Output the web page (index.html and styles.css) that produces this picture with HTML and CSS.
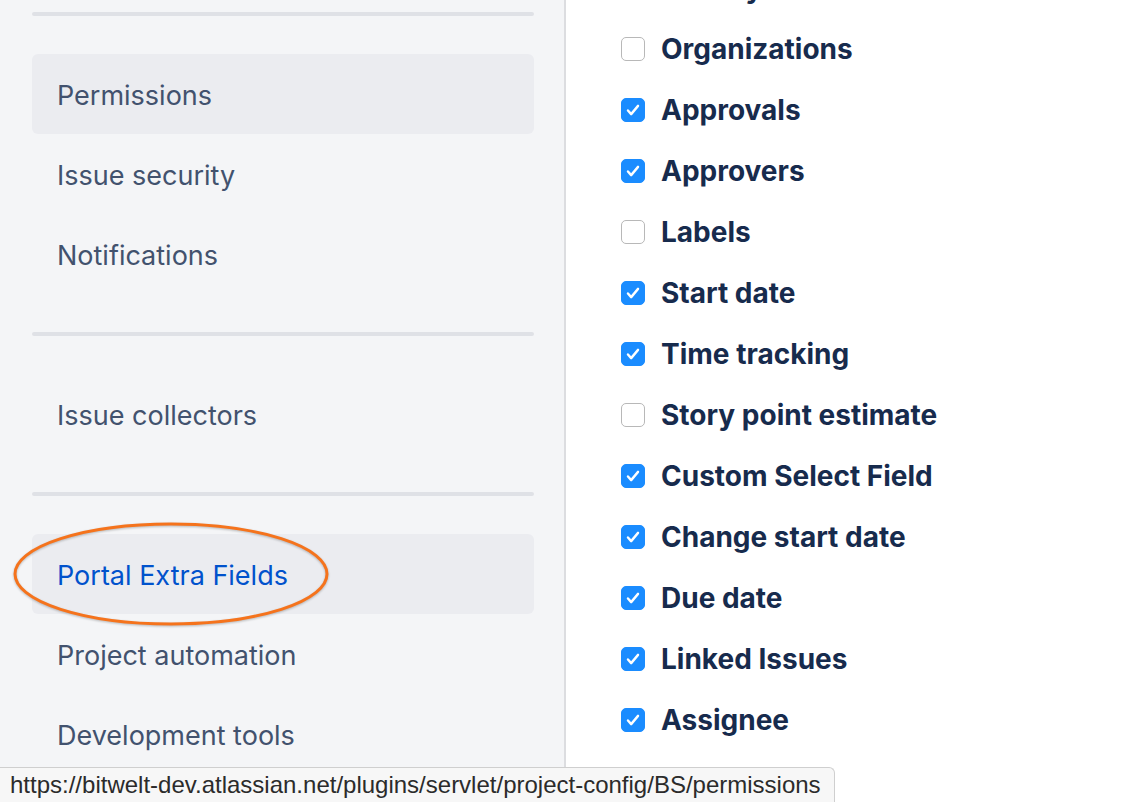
FILE: index.html
```html
<!DOCTYPE html>
<html lang="en">
<head>
    <meta charset="UTF-8">
    <title>Project settings</title>
    <link rel="stylesheet" href="styles.css">
</head>
<body>
    <div class="page">
        <nav class="sidebar">
            <div class="sep"></div>
            <a class="nav-item selected">Permissions</a>
            <a class="nav-item">Issue security</a>
            <a class="nav-item">Notifications</a>
            <div class="sep"></div>
            <a class="nav-item">Issue collectors</a>
            <div class="sep"></div>
            <a class="nav-item selected active">Portal Extra Fields</a>
            <a class="nav-item">Project automation</a>
            <a class="nav-item">Development tools</a>

            <svg class="marker" width="340" height="120" viewBox="0 0 340 120">
                <ellipse cx="171" cy="58" rx="156" ry="50" fill="none" stroke="#f5731c" stroke-width="3"/>
            </svg>
        </nav>

        <main class="fields">
            <label class="field"><span class="box on"></span>Priority</label>
            <label class="field"><span class="box"></span>Organizations</label>
            <label class="field"><span class="box on"></span>Approvals</label>
            <label class="field"><span class="box on"></span>Approvers</label>
            <label class="field"><span class="box"></span>Labels</label>
            <label class="field"><span class="box on"></span>Start date</label>
            <label class="field"><span class="box on"></span>Time tracking</label>
            <label class="field"><span class="box"></span>Story point estimate</label>
            <label class="field"><span class="box on"></span>Custom Select Field</label>
            <label class="field"><span class="box on"></span>Change start date</label>
            <label class="field"><span class="box on"></span>Due date</label>
            <label class="field"><span class="box on"></span>Linked Issues</label>
            <label class="field"><span class="box on"></span>Assignee</label>
        </main>
    </div>

    <div class="status-url">https://bitwelt-dev.atlassian.net/plugins/servlet/project-config/BS/permissions</div>
</body>
</html>
```

FILE: styles.css
```css
body {
    margin: 0;
    background: #fff;
    font-family: "Inter", "Noto Sans", sans-serif;
    overflow: hidden;
}

.page {
    display: flex;
    height: 802px;
}

.sidebar {
    position: relative;
    width: 502px;
    flex: none;
    padding: 12px 30px 0 32px;
    background: #f4f5f7;
    border-right: 2px solid #dcdde0;
}

.sep {
    height: 4px;
    border-radius: 2px;
    background: #dfe1e6;
    margin: 0 0 38px;
}

.nav-item + .sep {
    margin-top: 38px;
}

.nav-item {
    display: flex;
    align-items: center;
    height: 80px;
    padding: 3px 0 0 25px;
    box-sizing: border-box;
    border-radius: 6px;
    font-size: 27px;
    color: #42526e;
    text-decoration: none;
}

.nav-item.selected {
    background: #ebecf0;
}

.nav-item.active {
    color: #0052cc;
}

.marker {
    position: absolute;
    left: 0;
    top: 516px;
    filter: drop-shadow(0 1px 1px rgba(0, 0, 0, 0.25));
}

.fields {
    padding: 0 0 0 55px;
    margin-top: -43px;
}

.field {
    display: flex;
    align-items: center;
    height: 61px;
    font-size: 28px;
    font-weight: 700;
    color: #172b4d;
}

.box {
    width: 22px;
    height: 22px;
    margin-right: 16px;
    border: 1px solid #b8b8b8;
    border-radius: 5px;
    background: #fff;
    flex: none;
}

.box.on {
    border-color: #1a8cff;
    background: #1a8cff url("data:image/svg+xml;utf8,<svg xmlns='http://www.w3.org/2000/svg' width='24' height='24' viewBox='0 0 24 24'><path d='M6.5 12.5l3.5 4 7.5-9' fill='none' stroke='white' stroke-width='2.6' stroke-linecap='round' stroke-linejoin='round'/></svg>") center / 22px 22px no-repeat;
}

.status-url {
    position: fixed;
    left: 0;
    bottom: 0;
    width: 824px;
    height: 34px;
    padding-left: 10px;
    line-height: 34px;
    background: #f7f7f7;
    border: 1px solid #cfcfcf;
    border-left: none;
    border-bottom: none;
    border-top-right-radius: 6px;
    font-family: "Liberation Sans", Arial, sans-serif;
    font-size: 24px;
    color: #2b2b2b;
    white-space: nowrap;
    overflow: hidden;
}
```
